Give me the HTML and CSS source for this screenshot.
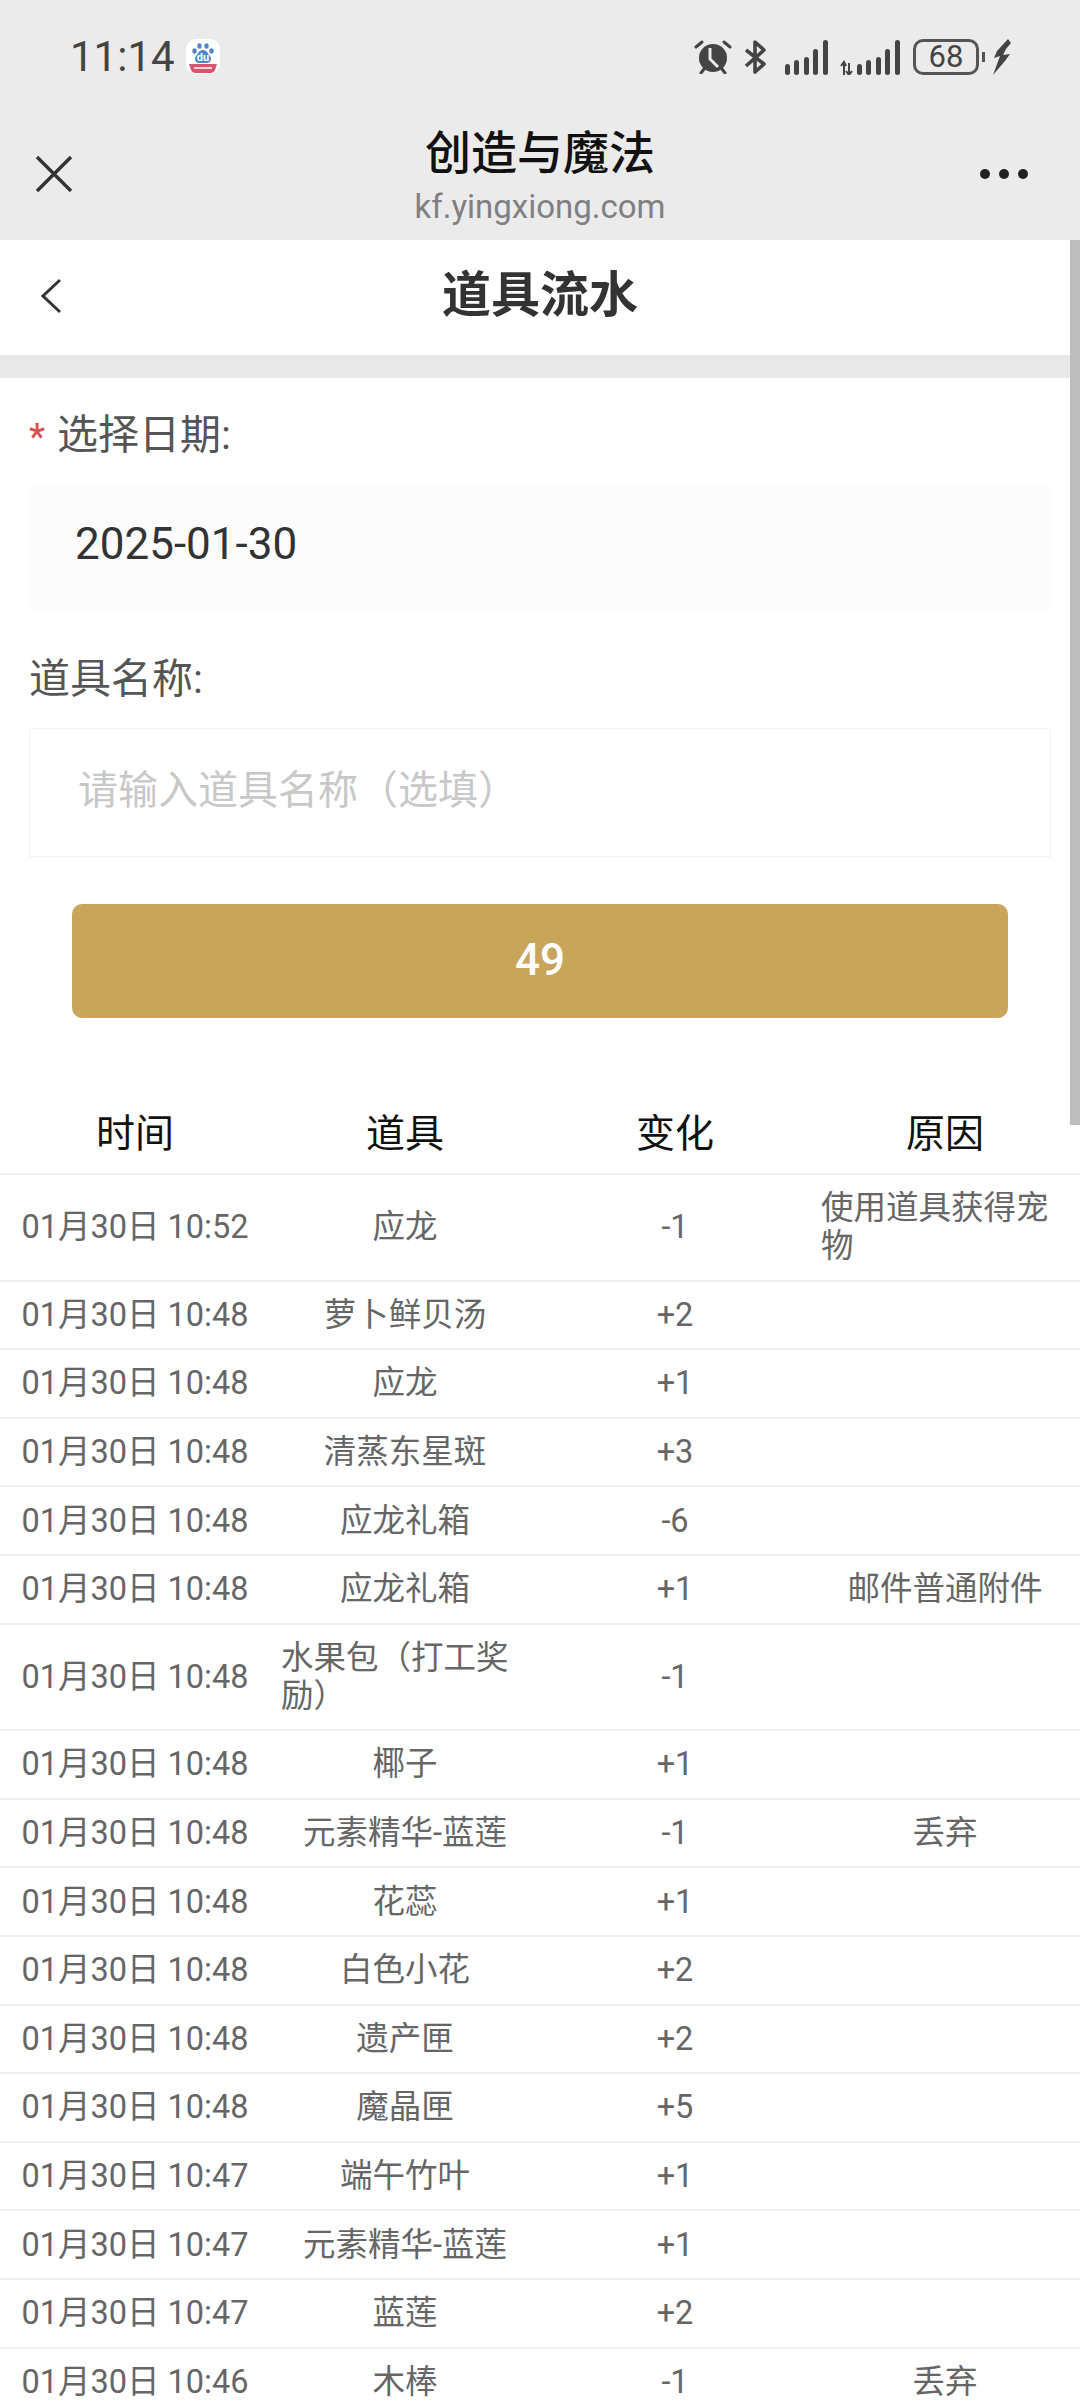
FILE: index.html
```html
<!DOCTYPE html>
<html>

<head>
    <meta charset="utf-8">
    <title>道具流水</title>
    <link rel="stylesheet" href="styles.css">
</head>

<body>
    <div class="topbar">
        <div class="status">
            <div class="status-left">
                <span class="clock">11:14</span>
                <svg class="baidu" width="36" height="36" viewBox="0 0 36 36">
                    <rect x="1" y="0" width="34" height="35" rx="10" fill="#fff" />
                    <path d="M4 25H32L30 31Q29 34 25 34H11Q7 34 6 31Z" fill="#d9546f" />
                    <path d="M9 29H27" stroke="#f6d5dc" stroke-width="2" />
                    <g fill="#4f86c6">
                        <ellipse cx="9.5" cy="12" rx="2.2" ry="2.8" />
                        <ellipse cx="14.5" cy="7" rx="2.2" ry="2.8" />
                        <ellipse cx="21.5" cy="7" rx="2.2" ry="2.8" />
                        <ellipse cx="26.5" cy="12" rx="2.2" ry="2.8" />
                        <path d="M18 11C14 11 13 15 11 17C9 19 10 24 14 24H22C26 24 27 19 25 17C23 15 22 11 18 11Z" />
                    </g>
                    <text class="baidu-du" x="18" y="22" text-anchor="middle">du</text>
                </svg>
            </div>
            <div class="status-right">
                <svg class="icon-alarm" width="38" height="34" viewBox="0 0 38 34">
                    <circle cx="19" cy="18" r="14" fill="#444" />
                    <path d="M2 7L8 2M36 7L30 2M7 33L10 29M31 33L28 29" stroke="#444" stroke-width="3" stroke-linecap="round" />
                    <path d="M16 8V19L24 27" fill="none" stroke="#ebebeb" stroke-width="3" />
                </svg>
                <svg class="icon-bt" width="22" height="34" viewBox="0 0 22 34">
                    <path d="M2 10L20 24L11 32V2L20 10L2 26" fill="none" stroke="#444" stroke-width="3.6" stroke-linejoin="round" />
                </svg>
                <svg class="icon-sig" width="43" height="35" viewBox="0 0 43 35">
                    <g fill="#444">
                        <rect x="0" y="24" width="5" height="11" rx="2.5" />
                        <rect x="9" y="20" width="5" height="15" rx="2.5" />
                        <rect x="19" y="17" width="5" height="18" rx="2.5" />
                        <rect x="28" y="9" width="5" height="26" rx="2.5" />
                        <rect x="38" y="0" width="5" height="35" rx="2.5" />
                    </g>
                </svg>
                <svg class="icon-sig2" width="60" height="35" viewBox="0 0 60 35">
                    <path d="M4 35V23M1 26L4 22L6 26M9 23V35M6 31L9 35L12 31" fill="none" stroke="#444" stroke-width="2" />
                    <g fill="#444">
                        <rect x="17" y="24" width="5" height="11" rx="2.5" />
                        <rect x="26" y="20" width="5" height="15" rx="2.5" />
                        <rect x="36" y="17" width="5" height="18" rx="2.5" />
                        <rect x="45" y="9" width="5" height="26" rx="2.5" />
                        <rect x="55" y="0" width="5" height="35" rx="2.5" />
                    </g>
                </svg>
                <div class="battery-wrap">
                    <div class="battery">68</div>
                    <div class="battery-tip"></div>
                </div>
                <svg width="18" height="36" viewBox="0 0 18 36">
                    <path d="M15 0L4 12L1 19L7 17L0 36L12 22L17 15L10 16L13 10L18 4Z" fill="#444" />
                </svg>
            </div>
        </div>
        <div class="nav">
            <svg class="nav-close" width="38" height="38" viewBox="0 0 38 38">
                <path d="M2 2L36 36M36 2L2 36" stroke="#333" stroke-width="3.4" />
            </svg>
            <div class="nav-title">
                <div class="nav-name">创造与魔法</div>
                <div class="nav-url">kf.yingxiong.com</div>
            </div>
            <div class="nav-more"><i></i><i></i><i></i></div>
        </div>
    </div>

    <div class="pagehead">
        <svg class="back" width="22" height="36" viewBox="0 0 22 36">
            <path d="M20 2L3 18L20 34" fill="none" stroke="#333" stroke-width="3" />
        </svg>
        <h1>道具流水</h1>
    </div>
    <div class="band"></div>

    <div class="form">
        <div class="label first"><span class="star">*</span>选择日期:</div>
        <div class="date-box">2025-01-30</div>
        <div class="label second">道具名称:</div>
        <div class="name-box">请输入道具名称（选填）</div>
        <div class="submit">49</div>
    </div>

    <div class="log">
        <div class="row head">
            <div class="cell">时间</div>
            <div class="cell">道具</div>
            <div class="cell">变化</div>
            <div class="cell">原因</div>
        </div>
        <div class="row">
            <div class="cell">01月30日 10:52</div>
            <div class="cell">应龙</div>
            <div class="cell">-1</div>
            <div class="cell">使用道具获得宠物</div>
        </div>
        <div class="row">
            <div class="cell">01月30日 10:48</div>
            <div class="cell">萝卜鲜贝汤</div>
            <div class="cell">+2</div>
            <div class="cell"></div>
        </div>
        <div class="row">
            <div class="cell">01月30日 10:48</div>
            <div class="cell">应龙</div>
            <div class="cell">+1</div>
            <div class="cell"></div>
        </div>
        <div class="row">
            <div class="cell">01月30日 10:48</div>
            <div class="cell">清蒸东星斑</div>
            <div class="cell">+3</div>
            <div class="cell"></div>
        </div>
        <div class="row">
            <div class="cell">01月30日 10:48</div>
            <div class="cell">应龙礼箱</div>
            <div class="cell">-6</div>
            <div class="cell"></div>
        </div>
        <div class="row">
            <div class="cell">01月30日 10:48</div>
            <div class="cell">应龙礼箱</div>
            <div class="cell">+1</div>
            <div class="cell">邮件普通附件</div>
        </div>
        <div class="row">
            <div class="cell">01月30日 10:48</div>
            <div class="cell">水果包（打工奖励）</div>
            <div class="cell">-1</div>
            <div class="cell"></div>
        </div>
        <div class="row">
            <div class="cell">01月30日 10:48</div>
            <div class="cell">椰子</div>
            <div class="cell">+1</div>
            <div class="cell"></div>
        </div>
        <div class="row">
            <div class="cell">01月30日 10:48</div>
            <div class="cell">元素精华-蓝莲</div>
            <div class="cell">-1</div>
            <div class="cell">丢弃</div>
        </div>
        <div class="row">
            <div class="cell">01月30日 10:48</div>
            <div class="cell">花蕊</div>
            <div class="cell">+1</div>
            <div class="cell"></div>
        </div>
        <div class="row">
            <div class="cell">01月30日 10:48</div>
            <div class="cell">白色小花</div>
            <div class="cell">+2</div>
            <div class="cell"></div>
        </div>
        <div class="row">
            <div class="cell">01月30日 10:48</div>
            <div class="cell">遗产匣</div>
            <div class="cell">+2</div>
            <div class="cell"></div>
        </div>
        <div class="row">
            <div class="cell">01月30日 10:48</div>
            <div class="cell">魔晶匣</div>
            <div class="cell">+5</div>
            <div class="cell"></div>
        </div>
        <div class="row">
            <div class="cell">01月30日 10:47</div>
            <div class="cell">端午竹叶</div>
            <div class="cell">+1</div>
            <div class="cell"></div>
        </div>
        <div class="row">
            <div class="cell">01月30日 10:47</div>
            <div class="cell">元素精华-蓝莲</div>
            <div class="cell">+1</div>
            <div class="cell"></div>
        </div>
        <div class="row">
            <div class="cell">01月30日 10:47</div>
            <div class="cell">蓝莲</div>
            <div class="cell">+2</div>
            <div class="cell"></div>
        </div>
        <div class="row">
            <div class="cell">01月30日 10:46</div>
            <div class="cell">木棒</div>
            <div class="cell">-1</div>
            <div class="cell">丢弃</div>
        </div>
    </div>

    <div class="scrollbar"></div>
</body>

</html>
```

FILE: styles.css
```css
* {
    box-sizing: border-box;
}

html,
body {
    margin: 0;
    height: 2403px;
    overflow: hidden;
}

body {
    position: relative;
    background-color: white;
    font-family: Roboto, "Noto Sans CJK SC", sans-serif;
}

.topbar {
    height: 240px;
    background-color: #ebebeb;
}

.status {
    display: flex;
    justify-content: space-between;
    align-items: center;
    height: 114px;
    padding: 0 69px 0 70px;
}

.status-left,
.status-right {
    display: flex;
    align-items: center;
}

.status-left {
    gap: 10px;
}

.status-right {
    gap: 10px;
}

.icon-alarm {
    margin-right: 2px;
}

.icon-bt {
    margin-right: 9px;
}

.icon-sig {
    margin-right: 2px;
}

.icon-sig2 {
    margin-right: 3px;
}

.clock {
    font-size: 42px;
    line-height: 50px;
    color: #444;
}

.baidu-du {
    font-size: 11px;
    font-weight: bold;
    fill: #fff;
}

.battery-wrap {
    display: flex;
    align-items: center;
    gap: 3px;
    margin-right: -2px;
}

.battery {
    width: 66px;
    height: 36px;
    border: solid 3px #555;
    border-radius: 10px;
    font-size: 31px;
    line-height: 30px;
    text-align: center;
    color: #444;
}

.battery-tip {
    width: 3px;
    height: 10px;
    background-color: #555;
}

.nav {
    display: grid;
    grid-template-columns: 1fr auto 1fr;
    height: 126px;
    padding: 0 35px 6px;
    align-items: center;
}

.nav-close {
    display: block;
}

.nav-title {
    align-self: start;
    margin-top: 10px;
    text-align: center;
}

.nav-name {
    font-size: 46px;
    line-height: 58px;
    font-weight: 500;
    color: #111;
}

.nav-url {
    font-size: 33px;
    line-height: 50px;
    color: #808080;
}

.nav-more {
    display: flex;
    justify-content: flex-end;
    gap: 9px;
    padding-right: 17px;
}

.nav-more i {
    width: 10px;
    height: 10px;
    border-radius: 50%;
    background-color: #222;
}

.pagehead {
    display: grid;
    grid-template-columns: 1fr auto 1fr;
    align-items: center;
    height: 115px;
    padding: 0 0 4px 40px;
}

.pagehead h1 {
    margin: 0 0 0 -40px;
    font-size: 49px;
    line-height: 60px;
    font-weight: bold;
    color: #333;
}

.band {
    height: 23px;
    background-color: #e9e9e9;
}

.form {
    padding: 32px 29px 0;
}

.label {
    font-size: 41px;
    line-height: 50px;
    color: #555;
}

.star {
    display: inline-block;
    width: 28px;
    color: #d9534f;
    font-size: 36px;
    font-weight: 500;
}

.date-box {
    height: 125px;
    margin-top: 23px;
    padding-left: 46px;
    font-size: 44px;
    line-height: 119px;
    color: #333;
    background-color: #fcfcfc;
}

.label.second {
    margin-top: 44px;
}

.name-box {
    height: 129px;
    margin-top: 24px;
    padding-left: 48px;
    font-size: 40px;
    line-height: 123px;
    color: #c8c8c8;
    border: solid 1px #f3f3f3;
}

.submit {
    height: 114px;
    margin: 47px 43px 0;
    border-radius: 10px;
    background-color: #c9a55c;
    color: white;
    font-size: 44px;
    font-weight: 500;
    line-height: 112px;
    text-align: center;
}

.log {
    margin-top: 76px;
}

.row {
    display: grid;
    grid-template-columns: repeat(4, 1fr);
    align-items: center;
    min-height: 68.6px;
    border-bottom: solid 2px #efefef;
    font-size: 32.5px;
    line-height: 38px;
    color: #666;
}

.row.head {
    height: 81px;
    font-size: 39px;
    color: #111;
}

.cell {
    display: flex;
    justify-content: center;
    padding: 14.3px 11px;
}

.scrollbar {
    position: absolute;
    top: 240px;
    right: 0;
    width: 10px;
    height: 885px;
    background-color: #bdbdbd;
}
```
